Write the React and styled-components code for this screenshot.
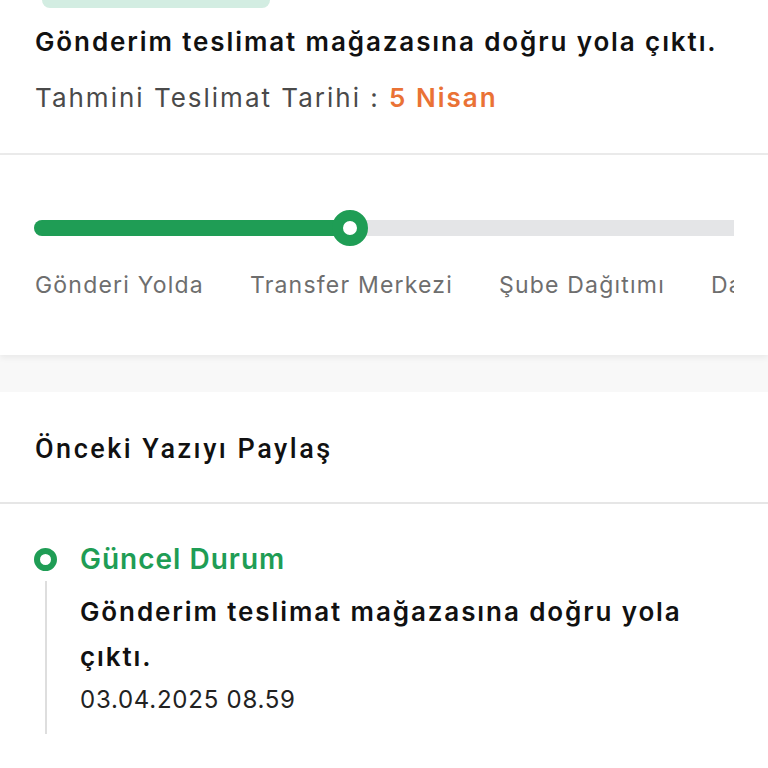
import styled, { createGlobalStyle } from "styled-components";

const GlobalStyle = createGlobalStyle`
  html, body {
    margin: 0;
    padding: 0;
    background: #fff;
  }
  body {
    font-family: Inter, "Noto Sans", sans-serif;
    color: #111;
    -webkit-font-smoothing: antialiased;
  }
`;

const steps = ["Gönderi Yolda", "Transfer Merkezi", "Şube Dağıtımı", "Dağıtımda"];

const App = () => {
  return (
    <>
      <GlobalStyle />
      <Page>
        <Summary>
          <Pill />
          <Title>Gönderim teslimat mağazasına doğru yola çıktı.</Title>
          <Estimate>
            Tahmini Teslimat Tarihi : <Highlight>5 Nisan</Highlight>
          </Estimate>
        </Summary>

        <Progress>
          <Track>
            <Fill style={{ width: 316 }} />
            <Knob />
          </Track>
          <Steps>
            {steps.map((s) => (
              <Step key={s}>{s}</Step>
            ))}
          </Steps>
        </Progress>

        <Spacer />

        <Share>
          <ShareTitle>Önceki Yazıyı Paylaş</ShareTitle>
        </Share>

        <Timeline>
          <Event>
            <Rail>
              <Ring />
              <Line />
            </Rail>
            <EventBody>
              <EventStatus>Güncel Durum</EventStatus>
              <EventText>Gönderim teslimat mağazasına doğru yola çıktı.</EventText>
              <EventDate>03.04.2025 08.59</EventDate>
            </EventBody>
          </Event>
        </Timeline>
      </Page>
    </>
  );
};

const Page = styled.div`
  width: 768px;
  min-height: 768px;
  overflow: hidden;
`;

const Summary = styled.section`
  padding: 0 35px 0;
  border-bottom: 2px solid #ebebeb;
  height: 155px;
  box-sizing: border-box;
`;

const Pill = styled.div`
  width: 228px;
  height: 8px;
  margin-left: 7px;
  background: #d3ede2;
  border-radius: 0 0 16px 16px;
`;

const Title = styled.h1`
  margin: 18px 0 0;
  font-size: 26px;
  font-weight: 600;
  letter-spacing: 1.9px;
  line-height: 32px;
  white-space: nowrap;
  color: #111;
`;

const Estimate = styled.p`
  margin: 24px 0 0;
  font-size: 26px;
  letter-spacing: 2px;
  line-height: 32px;
  color: #4a4a4a;
`;

const Highlight = styled.span`
  color: #ea7235;
  font-weight: 600;
`;

const Progress = styled.section`
  height: 200px;
  box-sizing: border-box;
  padding-top: 65px;
  box-shadow: 0 3px 6px rgba(0, 0, 0, 0.06);
  position: relative;
  z-index: 1;
  background: #fff;
`;

const Track = styled.div`
  position: relative;
  height: 16px;
  margin: 0 34px;
  background: #e4e5e7;
  border-radius: 8px 0 0 8px;
`;

const Fill = styled.div`
  height: 100%;
  background: #1f9d55;
  border-radius: 8px 0 0 8px;
`;

const Knob = styled.div`
  position: absolute;
  left: 298px;
  top: -10px;
  width: 36px;
  height: 36px;
  box-sizing: border-box;
  border-radius: 50%;
  border: 11px solid #1f9d55;
  background: #fff;
`;

const Steps = styled.div`
  display: flex;
  gap: 46px;
  margin: 35px 34px 0 35px;
  overflow: hidden;
  white-space: nowrap;
`;

const Step = styled.span`
  flex: none;
  font-size: 23px;
  letter-spacing: 1.2px;
  line-height: 28px;
  color: #6e6e6e;
`;

const Spacer = styled.div`
  height: 37px;
  background: #f8f8f8;
`;

const Share = styled.section`
  height: 112px;
  box-sizing: border-box;
  display: flex;
  align-items: center;
  padding: 0 35px;
  border-bottom: 2px solid #e6e6e6;
`;

const ShareTitle = styled.h2`
  margin: 4px 0 0;
  font-family: Roboto, "Liberation Sans", sans-serif;
  font-size: 27px;
  font-weight: 500;
  letter-spacing: 2.5px;
  color: #111;
`;

const Timeline = styled.section`
  padding: 38px 34px 0;
`;

const Event = styled.div`
  display: flex;
  gap: 23px;
`;

const Rail = styled.div`
  display: flex;
  flex-direction: column;
  align-items: center;
  width: 23px;
  padding-top: 6px;
`;

const Ring = styled.div`
  width: 23px;
  height: 23px;
  box-sizing: border-box;
  border-radius: 50%;
  border: 6px solid #1f9d55;
`;

const Line = styled.div`
  width: 2px;
  height: 153px;
  margin-top: 10px;
  background: #dedede;
`;

const EventBody = styled.div`
  width: 630px;
`;

const EventStatus = styled.div`
  font-size: 28px;
  font-weight: 600;
  letter-spacing: 1px;
  line-height: 34px;
  color: #1f9d55;
`;

const EventText = styled.div`
  margin-top: 13px;
  font-size: 26px;
  font-weight: 600;
  letter-spacing: 1.9px;
  line-height: 45px;
  color: #111;
`;

const EventDate = styled.div`
  margin-top: 6px;
  font-size: 24px;
  letter-spacing: 0.75px;
  line-height: 30px;
  color: #222;
`;

export default App;
